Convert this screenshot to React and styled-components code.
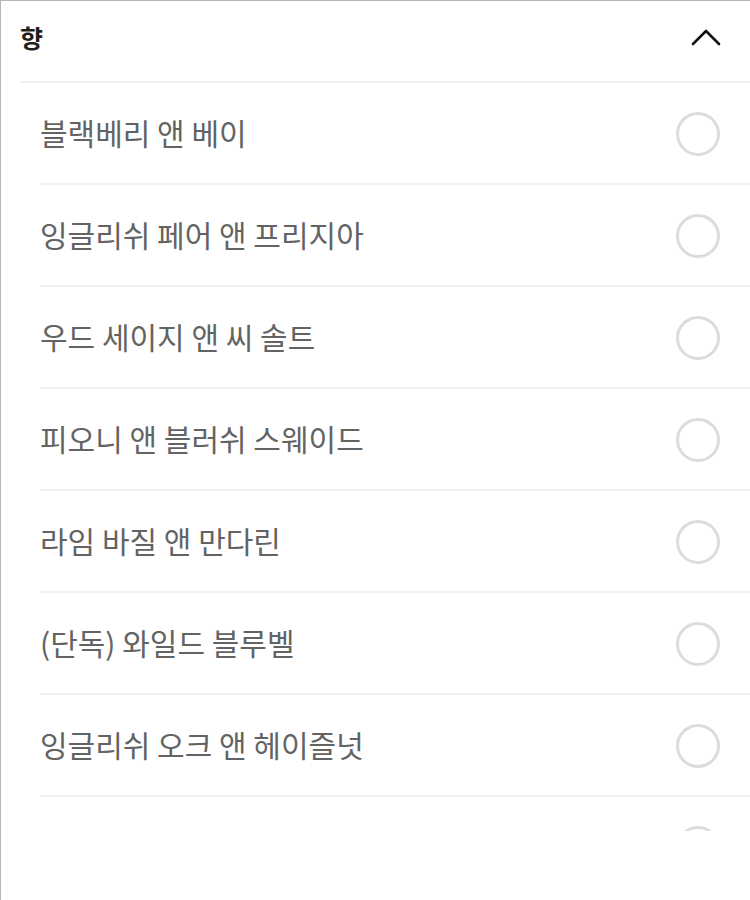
import React from 'react'
import styled, { createGlobalStyle } from 'styled-components'

const GlobalStyle = createGlobalStyle`
    html, body {
        margin: 0;
        padding: 0;
        background: #fff;
    }
    body {
        font-family: "Noto Sans CJK KR", "Noto Sans", sans-serif;
    }
`

const scents = [
    '블랙베리 앤 베이',
    '잉글리쉬 페어 앤 프리지아',
    '우드 세이지 앤 씨 솔트',
    '피오니 앤 블러쉬 스웨이드',
    '라임 바질 앤 만다린',
    '(단독) 와일드 블루벨',
    '잉글리쉬 오크 앤 헤이즐넛',
    '',
]

function App() {
    return (
        <>
            <GlobalStyle />
            <Page>
                <Panel>
                    <Header>
                        <Title>향</Title>
                        <Chevron viewBox="0 0 30 18" width="30" height="18">
                            <polyline points="2,16 15,3 28,16" />
                        </Chevron>
                    </Header>
                    <List>
                        {scents.map((name, i) => (
                            <Option key={i}>
                                <Label>{name}</Label>
                                <Radio />
                            </Option>
                        ))}
                    </List>
                </Panel>
            </Page>
        </>
    )
}

export default App

const Page = styled.div`
    height: 900px;
    border-top: 1px solid #b5b5b5;
    border-left: 1px solid #b5b5b5;
    box-sizing: border-box;
`

const Panel = styled.div`
    height: 830px;
    overflow: hidden;
`

const Header = styled.div`
    display: flex;
    align-items: center;
    justify-content: space-between;
    height: 80px;
    margin-left: 19px;
    padding-right: 29px;
    border-bottom: 2px solid #f0f0f0;
`

const Title = styled.h2`
    margin: 0;
    font-size: 25px;
    font-weight: 700;
    color: #1e1e1e;
    line-height: 1;
    margin-top: -8px;
`

const Chevron = styled.svg`
    margin-top: -8px;
    polyline {
        fill: none;
        stroke: #111;
        stroke-width: 2.6;
        stroke-linecap: round;
        stroke-linejoin: round;
    }
`

const List = styled.ul`
    list-style: none;
    margin: 0;
    padding: 0 0 0 39px;
`

const Option = styled.li`
    display: flex;
    align-items: center;
    justify-content: space-between;
    height: 100px;
    padding-right: 30px;
    border-bottom: 2px solid #f0f0f0;
`

const Label = styled.span`
    font-size: 30px;
    color: #636363;
    letter-spacing: 0;
    margin-top: -2px;
`

const Radio = styled.span`
    width: 38px;
    height: 38px;
    border: 3px solid #dcdcdc;
    border-radius: 50%;
    margin-top: 2px;
`
